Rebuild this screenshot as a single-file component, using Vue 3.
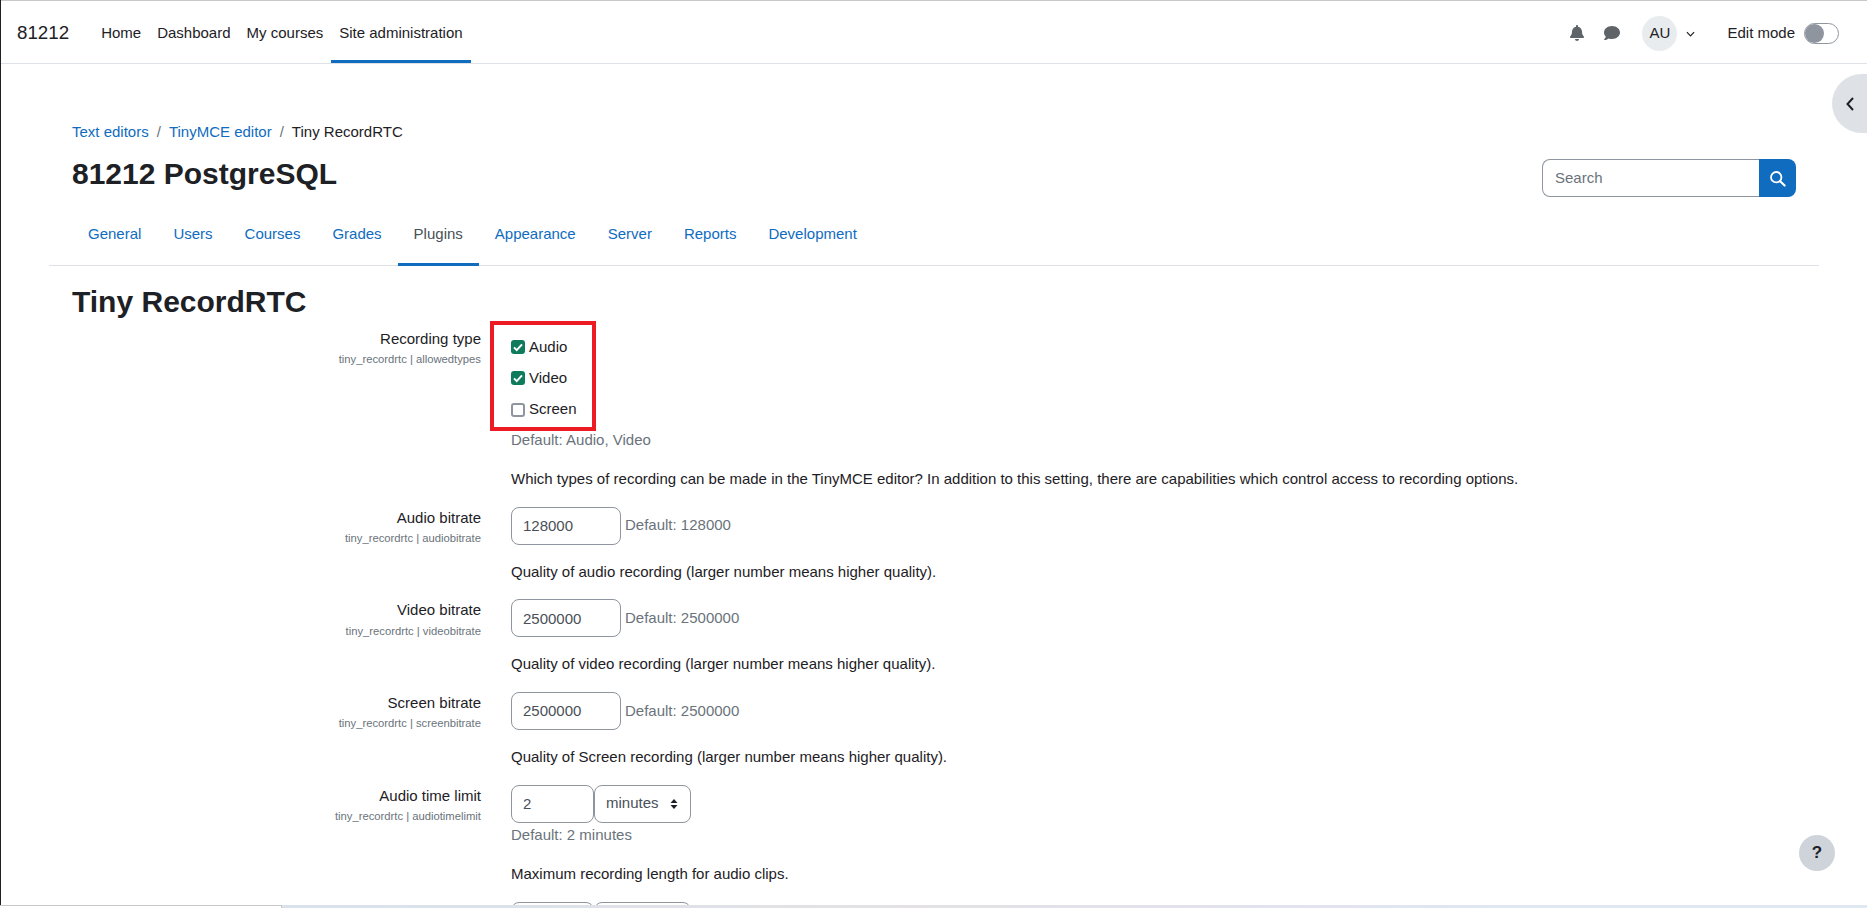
<script setup>
const nav = [
  { label: 'Home' },
  { label: 'Dashboard' },
  { label: 'My courses' },
  { label: 'Site administration', active: true },
]
const tabs = ['General', 'Users', 'Courses', 'Grades', 'Plugins', 'Appearance', 'Server', 'Reports', 'Development']
const bitrates = [
  { label: 'Audio bitrate', key: 'audiobitrate', value: '128000', desc: 'Quality of audio recording (larger number means higher quality).' },
  { label: 'Video bitrate', key: 'videobitrate', value: '2500000', desc: 'Quality of video recording (larger number means higher quality).' },
  { label: 'Screen bitrate', key: 'screenbitrate', value: '2500000', desc: 'Quality of Screen recording (larger number means higher quality).' },
]
const types = [
  { label: 'Audio', checked: true },
  { label: 'Video', checked: true },
  { label: 'Screen', checked: false },
]
</script>

<template>
  <div class="page">
    <header class="topbar">
      <span class="brand">81212</span>
      <nav class="mainnav">
        <a v-for="n in nav" :key="n.label" class="navlink" :class="{ active: n.active }">{{ n.label }}</a>
      </nav>
      <div class="usernav">
        <svg class="bell" viewBox="0 0 448 512"><path fill="#5f6468" d="M224 512c35.32 0 63.97-28.65 63.97-64H160.03c0 35.35 28.65 64 63.97 64zm215.39-149.71c-19.32-20.76-55.47-51.99-55.47-154.29 0-77.7-54.48-139.9-127.94-155.16V32c0-17.67-14.32-32-31.98-32s-31.98 14.33-31.98 32v20.84C118.56 68.1 64.08 130.3 64.08 208c0 102.3-36.15 133.53-55.47 154.29-6 6.45-8.66 14.16-8.61 21.71.11 16.4 12.98 32 32.1 32h383.8c19.12 0 32-15.6 32.1-32 .05-7.55-2.61-15.27-8.61-21.71z"/></svg>
        <svg class="chat" viewBox="0 0 512 512"><path fill="#5f6468" d="M256 32C114.6 32 0 125.1 0 240c0 49.6 21.4 95 57 130.7C44.5 421.1 2.7 466 2.2 466.5c-2.2 2.3-2.8 5.7-1.5 8.7S4.8 480 8 480c66.3 0 116-31.8 140.6-51.4 32.7 12.3 69 19.4 107.4 19.4 141.4 0 256-93.1 256-208S397.4 32 256 32z"/></svg>
        <span class="avatar">AU</span>
        <svg class="caret" viewBox="0 0 10 6"><path d="M1 1l4 4 4-4" fill="none" stroke="#1d2125" stroke-width="1.3"/></svg>
        <span class="editlabel">Edit mode</span>
        <span class="toggle"><span class="knob"></span></span>
      </div>
    </header>

    <main class="content">
      <div class="crumbs">
        <a class="link">Text editors</a><span class="sep">/</span><a class="link">TinyMCE editor</a><span class="sep">/</span><span>Tiny RecordRTC</span>
      </div>
      <div class="headrow">
        <h1 class="sitename">81212 PostgreSQL</h1>
        <div class="searchbox">
          <input class="searchinput" placeholder="Search" />
          <span class="searchbtn">
            <svg viewBox="0 0 16 16" width="17" height="17"><circle cx="6.8" cy="6.8" r="4.9" fill="none" stroke="#fff" stroke-width="1.7"/><path d="M10.5 10.5l4.2 4.2" stroke="#fff" stroke-width="2" stroke-linecap="round"/></svg>
          </span>
        </div>
      </div>
      <div class="tabs">
        <a v-for="t in tabs" :key="t" class="tab" :class="{ active: t === 'Plugins' }">{{ t }}</a>
      </div>

      <h2 class="pagetitle">Tiny RecordRTC</h2>

      <section class="row first">
        <div class="lab">
          <div class="labname">Recording type</div>
          <div class="labkey">tiny_recordrtc | allowedtypes</div>
        </div>
        <div class="ctl">
          <div class="checks">
            <label v-for="c in types" :key="c.label" class="check">
              <span class="box" :class="{ on: c.checked }">
                <svg v-if="c.checked" viewBox="0 0 14 14" width="14" height="14"><path d="M3 7.4l2.7 2.7L11 4.4" fill="none" stroke="#fff" stroke-width="2"/></svg>
              </span>
              {{ c.label }}
            </label>
            <div class="redbox"></div>
          </div>
          <div class="default">Default: Audio, Video</div>
          <p class="desc">Which types of recording can be made in the TinyMCE editor? In addition to this setting, there are capabilities which control access to recording options.</p>
        </div>
      </section>

      <section v-for="b in bitrates" :key="b.key" class="row">
        <div class="lab">
          <div class="labname">{{ b.label }}</div>
          <div class="labkey">tiny_recordrtc | {{ b.key }}</div>
        </div>
        <div class="ctl">
          <div class="inline">
            <input class="field wide" :value="b.value" />
            <span class="default side">Default: {{ b.value }}</span>
          </div>
          <p class="desc after">{{ b.desc }}</p>
        </div>
      </section>

      <section class="row">
        <div class="lab">
          <div class="labname">Audio time limit</div>
          <div class="labkey">tiny_recordrtc | audiotimelimit</div>
        </div>
        <div class="ctl">
          <div class="inline">
            <input class="field narrow" value="2" />
            <div class="selectbox">
              <span>minutes</span>
              <svg viewBox="0 0 8 12" width="8" height="12"><path d="M4 1l3.5 4h-7zM4 11L.5 7h7z" fill="#1d2125"/></svg>
            </div>
          </div>
          <div class="default under">Default: 2 minutes</div>
          <p class="desc">Maximum recording length for audio clips.</p>
        </div>
      </section>

      <section class="row">
        <div class="lab"></div>
        <div class="ctl">
          <div class="inline">
            <input class="field narrow" value="" />
            <div class="selectbox"></div>
          </div>
        </div>
      </section>
    </main>

    <button class="drawer">
      <svg viewBox="0 0 10 16" width="10" height="16"><path d="M8 2L2.5 8 8 14" fill="none" stroke="#1d2125" stroke-width="2"/></svg>
    </button>
    <button class="help">?</button>
    <div class="edgeleft"></div>
    <div class="strip"></div>
  </div>
</template>

<style>
html, body { margin: 0; height: 100%; overflow: hidden; background: #fff; }
</style>

<style scoped>
.page {
  height: 908px;
  overflow: hidden;
  font-family: "Liberation Sans", Arial, sans-serif;
  font-size: 15px;
  line-height: 22.5px;
  color: #1d2125;
  background: #fff;
}
.topbar {
  height: 62px;
  border-top: 1px solid #c8c8c8;
  border-bottom: 1px solid #dee2e6;
  display: flex;
  align-items: stretch;
  padding-left: 17px;
  padding-right: 28px;
}
.brand { font-size: 18.75px; align-self: center; margin-right: 24px; margin-top: 2px; }
.mainnav { display: flex; }
.navlink {
  display: flex;
  align-items: center;
  box-sizing: border-box;
  padding: 5px 8px 0;
  height: 62px;
  border-bottom: 3px solid transparent;
}
.navlink.active { border-bottom-color: #0f6cbf; }
.usernav { margin-left: auto; display: flex; align-items: center; padding-top: 2px; }
.bell { width: 14px; height: 16px; }
.chat { width: 16px; height: 16px; margin-left: 20px; }
.avatar {
  width: 35px; height: 35px; border-radius: 50%;
  background: #e9ecef;
  display: flex; align-items: center; justify-content: center;
  margin-left: 22px;
}
.caret { width: 9px; height: 6px; margin-left: 9px; margin-top: 1px; }
.editlabel { margin-left: 32px; }
.toggle {
  width: 35px; height: 21px; box-sizing: border-box;
  border: 1px solid #8f959e; border-radius: 11px;
  margin-left: 9px; position: relative; display: block;
}
.knob {
  position: absolute; left: 0; top: 0;
  width: 19px; height: 19px; border-radius: 50%;
  background: #8f959e;
}
.content { padding: 57px 48px 0 49px; }
.crumbs { padding-left: 23px; }
.link { color: #0f6cbf; }
.sep { color: #6a737b; margin: 0 8px; }
.headrow {
  display: flex; align-items: flex-start; justify-content: space-between;
  padding: 0 23px;
  height: 57px;
}
.sitename {
  margin: 12px 0 0; font-size: 30px; line-height: 36px; font-weight: 700;
}
.searchbox { display: flex; margin-top: 15.5px; width: 254px; height: 38px; }
.searchinput {
  flex: 1; min-width: 0; box-sizing: border-box;
  border: 1px solid #8f959e; border-right: 0;
  border-radius: 8px 0 0 8px;
  padding: 0 12px;
  font: inherit; color: #1d2125; outline: 0;
}
.searchinput::placeholder { color: #6a737b; opacity: 1; }
.searchbtn {
  width: 37px; background: #0f6cbf; border-radius: 0 8px 8px 0;
  display: flex; align-items: center; justify-content: center;
}
.tabs {
  display: flex;
  border-bottom: 1px solid #dee2e6;
  height: 64.5px;
  padding-left: 23px;
}
.tab {
  padding: 4px 16px 0;
  color: #0f6cbf;
  display: flex; align-items: center;
  margin-bottom: -1px;
  border-bottom: 3px solid transparent;
}
.tab.active { color: #495057; border-bottom-color: #0f6cbf; }
.pagetitle {
  margin: 18px 0 0 23px; font-size: 30px; line-height: 36px; font-weight: 700;
}
.row { display: grid; grid-template-columns: 432px 1fr; column-gap: 30px; margin-top: 16.17px; }
.row.first { margin-top: 7.5px; }
.lab { text-align: right; }
.labname { line-height: 22.5px; }
.labkey { font-size: 11.25px; line-height: 15px; color: #6a737b; margin-top: 2px; }
.ctl { min-width: 0; }
.checks { position: relative; padding-top: 4px; }
.check { display: flex; align-items: center; height: 31px; }
.check:nth-child(3) { height: 32px; }
.box {
  width: 14px; height: 14px; box-sizing: border-box;
  border: 2px solid #8f959e; border-radius: 3px;
  margin-right: 4px; display: block; background: #fff;
}
.box.on { background: #0f7b5d; border: 0; }
.box svg { display: block; }
.redbox {
  position: absolute; left: -21px; top: -7px;
  width: 106px; height: 110px; box-sizing: border-box;
  border: 4px solid #ed1c24;
  pointer-events: none;
}
.default { color: #6a737b; }
.checks + .default { margin-top: 3px; }
.desc { margin: 17px 0 0; }
.desc.after { margin-top: 16px; }
.inline { display: flex; align-items: center; }
.field {
  box-sizing: border-box; height: 38px;
  border: 1px solid #8f959e; border-radius: 8px;
  padding: 0 11px; font: inherit; color: #495057; outline: 0; background: #fff;
}
.wide { width: 110px; }
.narrow { width: 83px; }
.side { margin-left: 4px; }
.selectbox {
  box-sizing: border-box; width: 97px; height: 38px;
  border: 1px solid #8f959e; border-radius: 8px;
  padding: 0 12px 0 11px; color: #495057;
  display: flex; align-items: center; justify-content: space-between;
}
.under { margin-top: 1px; }
.drawer {
  position: fixed; right: 0; top: 74px;
  width: 35px; height: 59px; border: 0; padding: 0;
  background: #dee2e6; border-radius: 30px 0 0 30px;
  display: flex; align-items: center; justify-content: center;
}
.help {
  position: fixed; left: 1799px; top: 835px;
  width: 36px; height: 36px; border: 0; border-radius: 50%;
  background: #ced4da; color: #1d2125;
  font: 700 17px "Liberation Sans", Arial, sans-serif; padding: 0;
}
.edgeleft { position: fixed; left: 0; top: 0; width: 1px; height: 905px; background: #1d2125; }
.strip {
  position: fixed; left: 0; right: 0; top: 905px; height: 3px;
  background: linear-gradient(90deg, #d8e2ec 282px, #e3e1e4 900px, #e2e2ee 1250px, #dfe7f0 1500px, #dfe7f0 100%);
}
.strip::before {
  content: ""; display: block; width: 282px; height: 3px; box-sizing: border-box;
  background: #fff; border-top: 1px solid #c8c8c8; border-right: 1px solid #c8c8c8;
}
</style>
